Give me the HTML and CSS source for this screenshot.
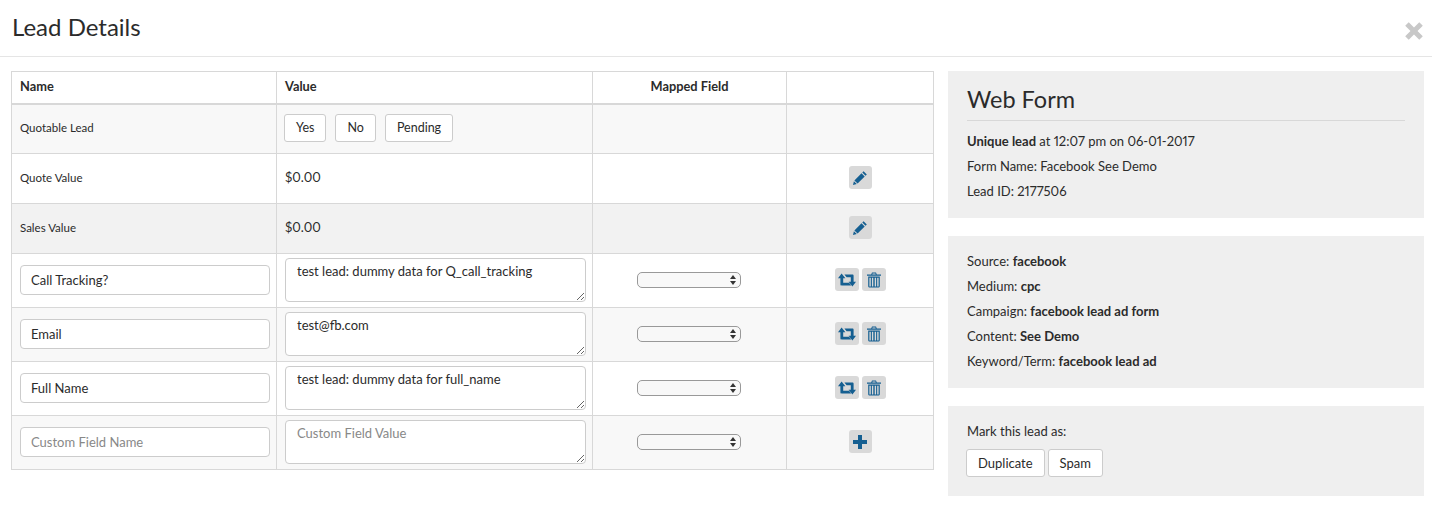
FILE: index.html
```html
<!DOCTYPE html>
<html lang="en">
<head>
<meta charset="utf-8">
<title>Lead Details</title>
<link rel="stylesheet" href="styles.css">
</head>
<body>
<header class="modal-header">
  <h1 class="modal-title">Lead Details</h1>
  <button class="close" aria-label="Close">
    <svg viewBox="0 0 20 20" width="22" height="22"><path d="M2 5.2 5.2 2 10 6.8 14.8 2 18 5.2 13.2 10 18 14.8 14.8 18 10 13.2 5.2 18 2 14.8 6.8 10 2 5.2Z"/></svg>
  </button>
</header>
<main class="modal-body">
  <table class="lead-table">
    <colgroup><col class="c-name"><col class="c-value"><col class="c-map"><col class="c-act"></colgroup>
    <thead>
      <tr><th>Name</th><th>Value</th><th class="center">Mapped Field</th><th></th></tr>
    </thead>
    <tbody>
      <tr class="fixed odd">
        <td class="label">Quotable Lead</td>
        <td><div class="btn-row"><button class="btn">Yes</button><button class="btn">No</button><button class="btn">Pending</button></div></td>
        <td></td><td></td>
      </tr>
      <tr class="fixed">
        <td class="label">Quote Value</td><td>$0.00</td><td></td>
        <td><button class="icon-btn"><svg viewBox="0 0 16 16"><use href="#pencil"/></svg></button></td>
      </tr>
      <tr class="fixed even-gray">
        <td class="label">Sales Value</td><td>$0.00</td><td></td>
        <td><button class="icon-btn"><svg viewBox="0 0 16 16"><use href="#pencil"/></svg></button></td>
      </tr>
      <tr class="field">
        <td><input class="text" value="Call Tracking?"></td>
        <td><textarea class="area">test lead: dummy data for Q_call_tracking</textarea></td>
        <td><span class="select-wrap"><select class="select"><option></option></select><svg class="arrows" viewBox="0 0 8 12"><path d="M4 1 7 5H1ZM4 11 1 7H7Z"/></svg></span></td>
        <td><div class="icon-row"><button class="icon-btn wide"><svg class="i-retweet" viewBox="0 0 18 16"><use href="#retweet"/></svg></button><button class="icon-btn wide"><svg viewBox="0 0 16 16"><use href="#trash"/></svg></button></div></td>
      </tr>
      <tr class="field odd">
        <td><input class="text" value="Email"></td>
        <td><textarea class="area">test@fb.com</textarea></td>
        <td><span class="select-wrap"><select class="select"><option></option></select><svg class="arrows" viewBox="0 0 8 12"><path d="M4 1 7 5H1ZM4 11 1 7H7Z"/></svg></span></td>
        <td><div class="icon-row"><button class="icon-btn wide"><svg class="i-retweet" viewBox="0 0 18 16"><use href="#retweet"/></svg></button><button class="icon-btn wide"><svg viewBox="0 0 16 16"><use href="#trash"/></svg></button></div></td>
      </tr>
      <tr class="field">
        <td><input class="text" value="Full Name"></td>
        <td><textarea class="area">test lead: dummy data for full_name</textarea></td>
        <td><span class="select-wrap"><select class="select"><option></option></select><svg class="arrows" viewBox="0 0 8 12"><path d="M4 1 7 5H1ZM4 11 1 7H7Z"/></svg></span></td>
        <td><div class="icon-row"><button class="icon-btn wide"><svg class="i-retweet" viewBox="0 0 18 16"><use href="#retweet"/></svg></button><button class="icon-btn wide"><svg viewBox="0 0 16 16"><use href="#trash"/></svg></button></div></td>
      </tr>
      <tr class="field odd">
        <td><input class="text" placeholder="Custom Field Name"></td>
        <td><textarea class="area" placeholder="Custom Field Value"></textarea></td>
        <td><span class="select-wrap"><select class="select"><option></option></select><svg class="arrows" viewBox="0 0 8 12"><path d="M4 1 7 5H1ZM4 11 1 7H7Z"/></svg></span></td>
        <td><button class="icon-btn"><svg viewBox="0 0 16 16"><use href="#plus"/></svg></button></td>
      </tr>
    </tbody>
  </table>
  <aside class="side">
    <section class="panel panel-form">
      <h2 class="panel-title">Web Form</h2>
      <p><b>Unique lead</b> at 12:07 pm on 06-01-2017</p>
      <p>Form Name: Facebook See Demo</p>
      <p>Lead ID: 2177506</p>
    </section>
    <section class="panel panel-source">
      <p>Source: <b>facebook</b></p>
      <p>Medium: <b>cpc</b></p>
      <p>Campaign: <b>facebook lead ad form</b></p>
      <p>Content: <b>See Demo</b></p>
      <p>Keyword/Term: <b>facebook lead ad</b></p>
    </section>
    <section class="panel panel-mark">
      <p>Mark this lead as:</p>
      <div class="mark-row"><button class="btn tall">Duplicate</button><button class="btn tall">Spam</button></div>
    </section>
  </aside>
</main>
<svg class="defs" aria-hidden="true">
  <defs>
    <path id="pencil" d="M11.6 1.2 14.8 4.4 13.5 5.7 10.3 2.5ZM9.5 3.3 12.7 6.5 5.6 13.6 2.4 10.4ZM1.9 11.2 4.8 14.1 1 15Z"/>
    <path id="retweet" d="M3.6 1.6 7.4 6.2H5.2V10.8H11L13.2 13.4H3.6C2.8 13.4 2.4 13 2.4 12.2V6.2H0ZM14.4 14.4 10.6 9.8H12.8V5.2H8.6L6.4 2.6H14.4C15.2 2.6 15.6 3 15.6 3.8V9.8H18Z"/>
    <path id="trash" fill-rule="evenodd" d="M6 .6H10L10.8 2.4H15V3.8H1V2.4H5.2ZM6.6 1.5 6.3 2.4H9.7L9.4 1.5ZM2.2 4.6H13.8V14C13.8 15 13.1 15.6 12.2 15.6H3.8C2.9 15.6 2.2 15 2.2 14ZM3.4 5.8V14.4H4.8V5.8ZM5.9 5.8V14.4H7.3V5.8ZM8.7 5.8V14.4H10.1V5.8ZM11.2 5.8V14.4H12.6V5.8Z"/>
    <path id="plus" d="M6 1H10V6H15V10H10V15H6V10H1V6H6Z"/>
  </defs>
</svg>
</body>
</html>
```
FILE: styles.css
```css
* { box-sizing: border-box; }
html, body { margin: 0; padding: 0; }
body {
  background: #fff;
  color: #2b2b2b;
  font-family: Lato, "Open Sans", sans-serif;
  font-size: 13px;
  line-height: 25px;
  font-variant-numeric: proportional-nums;
  overflow: hidden;
}
.defs { display: none; }
button, input, textarea, select { font-family: inherit; color: inherit; font-variant-numeric: inherit; }

.modal-header {
  height: 57px;
  border-bottom: 1px solid #e5e5e5;
  padding: 0 7px 0 12px;
  display: flex;
  align-items: center;
  justify-content: space-between;
}
.modal-title { margin: 0; font-size: 24px; font-weight: 400; line-height: 30px; padding-bottom: 2px; }
.close { border: 0; background: none; padding: 0; display: flex; margin-top: 6px; }
.close svg { fill: #c8c8c8; display: block; }

.modal-body {
  display: flex;
  align-items: flex-start;
  gap: 14px;
  padding: 14px 8px 0 11px;
}
.lead-table {
  width: 923px;
  flex: none;
  table-layout: fixed;
  border-collapse: collapse;
  border: 1px solid #d8d8d8;
}
.c-name { width: 265px; }
.c-value { width: 316px; }
.c-map { width: 194px; }
.c-act { width: 147px; }
.lead-table th, .lead-table td {
  border: 1px solid #d8d8d8;
  padding: 0 8px 2px;
  vertical-align: middle;
  text-align: left;
}
.lead-table th { height: 32px; font-weight: 700; font-size: 12.8px; border-bottom-width: 2px; }
.lead-table .center { text-align: center; }
.fixed td { height: 50px; }
.field td { height: 54px; }
.odd td { background: #f8f8f8; }
.even-gray td { background: #f2f2f2; }
.lead-table .label { font-size: 11.5px; }

.btn {
  height: 28px;
  padding: 0 11px;
  background: #fff;
  border: 1px solid #ccc;
  border-radius: 3px;
  font-size: 12.5px;
  line-height: 26px;
}
.btn-row { display: flex; gap: 9px; margin-left: -1px; }
.tall { height: 28px; font-size: 13px; }

.icon-btn {
  width: 23px;
  height: 23px;
  padding: 0;
  margin: 0 auto;
  border: 0;
  border-radius: 3px;
  background: #d9d9d9;
  display: flex;
  align-items: center;
  justify-content: center;
}
.icon-btn svg { width: 16px; height: 16px; fill: #155f91; display: block; flex: none; }
.icon-btn svg.i-retweet { width: 18px; }
.icon-btn.wide { width: 24px; margin: 0; }
.icon-row { display: flex; justify-content: center; gap: 3px; }

.text {
  display: block;
  width: 250px;
  height: 30px;
  padding: 0 10px;
  background: #fff;
  border: 1px solid #ccc;
  border-radius: 4px;
  font-size: 13px;
  outline: 0;
}
.area {
  display: block;
  width: 301px;
  height: 44px;
  padding: 3px 11px;
  background: #fff;
  border: 1px solid #ccc;
  border-radius: 4px;
  font-size: 13px;
  line-height: 19px;
  outline: 0;
}
.text::placeholder, .area::placeholder { color: #888; opacity: 1; }

.select-wrap { position: relative; display: block; width: 104px; height: 16px; margin-left: 36px; }
.select {
  appearance: none;
  display: block;
  width: 104px;
  height: 16px;
  padding: 0;
  background: #f8f8f8;
  border: 1px solid #999;
  border-radius: 5px;
  font-size: 11px;
}
.arrows { position: absolute; right: 4px; top: 2px; width: 8px; height: 12px; fill: #333; pointer-events: none; }

.side { width: 476px; flex: none; display: flex; flex-direction: column; gap: 18px; }
.panel { background: #efefef; padding: 0 19px; }
.panel p { margin: 0; }
.panel-form { height: 147px; padding-top: 13px; }
.panel-title {
  margin: 0 0 8px;
  padding-bottom: 6px;
  border-bottom: 1px solid #d8d8d8;
  font-size: 23.5px;
  line-height: 30px;
  font-weight: 400;
}
.panel-source { height: 152px; padding-top: 13px; }
.panel-mark { height: 90px; padding-top: 13px; }
.mark-row { display: flex; gap: 3px; margin-top: 5px; margin-left: -1px; }
```
